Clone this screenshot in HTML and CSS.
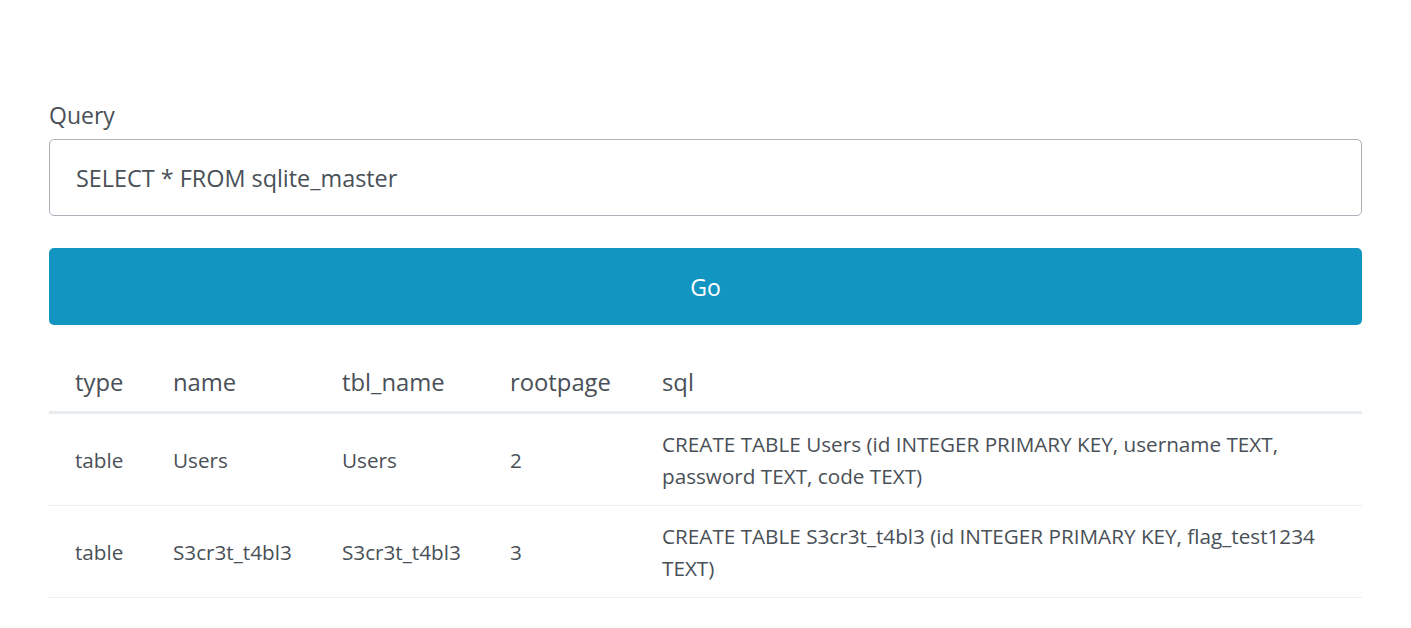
FILE: index.html
```html
<!DOCTYPE html>
<html lang="en">
<head>
<meta charset="utf-8">
<title>Query</title>
<link rel="stylesheet" href="styles.css">
</head>
<body>
<main class="page">
  <form class="query-form">
    <label class="query-label" for="q">Query</label>
    <input class="query-input" id="q" type="text" value="SELECT * FROM sqlite_master">
    <button class="go-btn" type="button">Go</button>
  </form>
  <table class="results">
    <thead>
      <tr>
        <th class="c-type">type</th>
        <th class="c-name">name</th>
        <th class="c-tbl">tbl_name</th>
        <th class="c-root">rootpage</th>
        <th class="c-sql">sql</th>
      </tr>
    </thead>
    <tbody>
      <tr>
        <td>table</td>
        <td>Users</td>
        <td>Users</td>
        <td>2</td>
        <td>CREATE TABLE Users (id INTEGER PRIMARY KEY, username TEXT, password TEXT, code TEXT)</td>
      </tr>
      <tr>
        <td>table</td>
        <td>S3cr3t_t4bl3</td>
        <td>S3cr3t_t4bl3</td>
        <td>3</td>
        <td>CREATE TABLE S3cr3t_t4bl3 (id INTEGER PRIMARY KEY, flag_test1234 TEXT)</td>
      </tr>
    </tbody>
  </table>
</main>
</body>
</html>
```

FILE: styles.css
```css
* { box-sizing: border-box; }
html, body {
  margin: 0;
  background: #fff;
}
body {
  font-family: "Open Sans", "Noto Sans", sans-serif;
  color: #495057;
}
.page {
  padding: 97px 49px 0 49px;
}
.query-form {
  display: flex;
  flex-direction: column;
}
.query-label {
  font-size: 23px;
  line-height: 36px;
  margin-bottom: 6px;
}
.query-input {
  height: 77px;
  padding: 0 26px;
  font-family: inherit;
  font-size: 23.4px;
  color: #495057;
  border: 1px solid #aab1b8;
  border-radius: 5px;
  background: #fff;
  outline: none;
}
.go-btn {
  margin-top: 32px;
  height: 77px;
  border: none;
  border-radius: 5px;
  background: #1395c2;
  color: #fff;
  font-family: inherit;
  font-size: 23px;
}
.results {
  margin-top: 25px;
  width: 100%;
  table-layout: fixed;
  border-collapse: collapse;
  font-size: 20.7px;
  line-height: 32px;
}
.results th {
  font-weight: normal;
  font-size: 23.8px;
  text-align: left;
  white-space: nowrap;
  padding: 16px 0 13px 26px;
  border-bottom: 3px solid #e9ecef;
}
.results td {
  padding: 14px 26px 13px;
  vertical-align: middle;
  border-bottom: 1px solid #eceeef;
}
.c-type { width: 98px; }
.c-name { width: 169px; }
.c-tbl { width: 168px; }
.c-root { width: 152px; }
```
